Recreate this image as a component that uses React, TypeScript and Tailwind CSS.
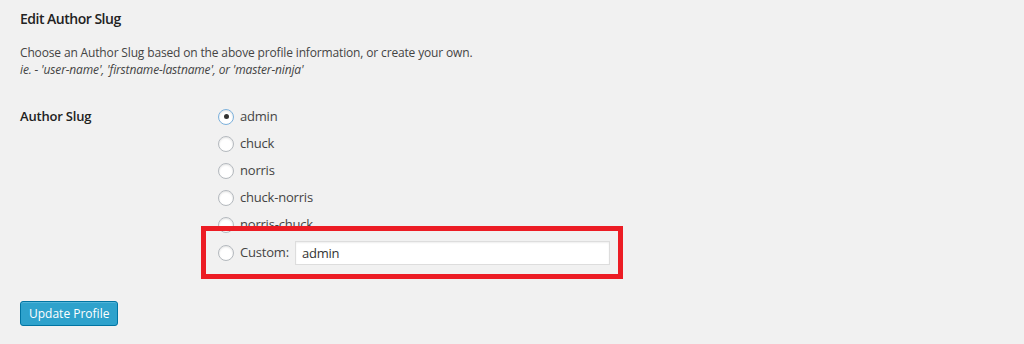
import { useState } from 'react';

const slugs = ['admin', 'chuck', 'norris', 'chuck-norris', 'norris-chuck'];

// radio drawn like the old WP/mac style
const Radio = ({ checked, onClick }: { checked: boolean; onClick: () => void }) => (
  <span
    onClick={onClick}
    className={`w-4 h-4 shrink-0 rounded-full border bg-white flex items-center justify-center shadow-[inset_0_1px_2px_rgba(0,0,0,0.12)] ${
      checked ? 'border-[#7cb1dc] shadow-[0_0_2px_rgba(30,140,190,0.6)]' : 'border-[#b4b9be]'
    }`}
  >
    {checked && <span className="w-[5px] h-[5px] rounded-full bg-[#333]" />}
  </span>
);

export default function App() {
  const [selected, setSelected] = useState('admin');
  const [custom, setCustom] = useState('admin');

  return (
    <div className="h-[344px] w-full bg-[#f1f1f1] px-5 pt-[7px] text-[#444] font-['Open_Sans',_'Liberation_Sans',_sans-serif] overflow-hidden">
      <h3 className="text-[14px] leading-6 font-semibold tracking-[-0.5px] text-[#222]">Edit Author Slug</h3>

      <div className="mt-[13px] text-[12px] leading-[17px] tracking-[-0.15px]">
        <p>Choose an Author Slug based on the above profile information, or create your own.</p>
        <p className="italic">ie. - 'user-name', 'firstname-lastname', or 'master-ninja'</p>
      </div>

      <div className="mt-[25px] flex">
        <div className="w-[198px] shrink-0 h-[27px] flex items-center text-[13px] font-semibold tracking-[-0.2px] text-[#222]">
          Author Slug
        </div>

        <div className="relative flex flex-col text-[13px] tracking-[-0.2px]">
          {slugs.map((slug) => (
            <label key={slug} className="h-[27px] flex items-center gap-[6px] cursor-pointer">
              <Radio checked={selected === slug} onClick={() => setSelected(slug)} />
              <span>{slug}</span>
            </label>
          ))}

          <div className="h-[30px] flex items-center gap-[6px]">
            <Radio checked={selected === 'custom'} onClick={() => setSelected('custom')} />
            <span>Custom:</span>
            <input
              value={custom}
              onChange={(e) => setCustom(e.target.value)}
              className="w-[315px] h-6 bg-white border border-[#ddd] px-[6px] text-[13px] text-[#333] outline-none shadow-[inset_0_1px_2px_rgba(0,0,0,0.07)]"
            />
          </div>

          {/* annotation box */}
          <div className="absolute left-[-17px] top-[123px] w-[422px] h-[53px] border-[5px] border-[#ec1c24] pointer-events-none" />
        </div>
      </div>

      <button className="mt-[33px] h-[25px] px-[8px] rounded-[3px] bg-[#2ea2cc] border border-[#0074a2] text-white text-[12px] shadow-[inset_0_1px_0_rgba(120,200,230,0.5)]">
        Update Profile
      </button>
    </div>
  );
}
